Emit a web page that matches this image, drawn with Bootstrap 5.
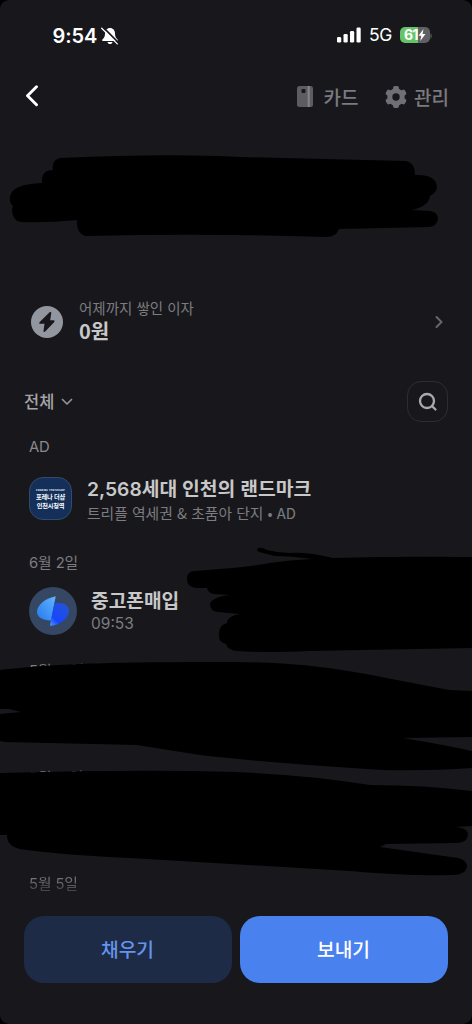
<!DOCTYPE html>
<html lang="ko" data-bs-theme="dark">
<head>
<meta charset="utf-8">
<meta name="viewport" content="width=device-width, initial-scale=1">
<title>계좌</title>
<link href="https://cdn.jsdelivr.net/npm/bootstrap@5.3.0/dist/css/bootstrap.min.css" rel="stylesheet">
<style>
  html, body { background: #000; }
  body { font-family: Inter, "Noto Sans CJK KR", sans-serif; overflow: hidden; }
  .phone { width: 472px; height: 1024px; background: #18181c; border-radius: 9px; overflow: hidden; }
  .phone svg { display: block; flex: none; }
  .phone span, .phone button, .phone .line { white-space: nowrap; }
  .kr { font-family: "Noto Sans CJK KR", sans-serif; }
  .status { height: 71px; padding: 0 40px 0 52.500px; color: #fff; }
  .clock { font-size: 20px; font-weight: 600; letter-spacing: -.1px; }
  .net { font-size: 17.5px; letter-spacing: -.3px; font-weight: 400; }
  .battery { width: 30px; height: 16px; border-radius: 5px; background: linear-gradient(90deg, #67c466 61%, #5f6064 61%); font-size: 14px; font-weight: 700; letter-spacing: -.5px; line-height: 16px; color: #fff; }
  .topbar { height: 52px; padding: 0 23px 0 25px; color: #7a7a80; font-size: 19px; font-weight: 500; }
  .topbar span { line-height: 26px; }
  .balance { height: 158px; }
  .interest { height: 82px; padding: 0 28.500px 0 31px; }
  .filters { height: 77px; padding: 0 24px; font-size: 16.5px; font-weight: 500; color: #a4a4a9; }
  .search-btn { width: 41px; height: 41px; border: 1px solid #2c2c33; border-radius: 14px; }
  .muted { color: #7c7c81; font-size: 15px; line-height: 20px; }
  .title-text { color: #c8c8c9; font-size: 19.2px; line-height: 24px; font-weight: 600; }
  .ad-logo { width: 43px; height: 43px; border-radius: 14px; border: 1px solid #334b68; background: #142f59; color: #fff; font-size: 6.2px; line-height: 9px; font-weight: 700; letter-spacing: -.2px; }
  .ad-logo small { font-size: 2.6px; line-height: 4px; letter-spacing: .25px; }
  .avatar { width: 48px; height: 48px; background: #354762; }
  .day { padding-left: 29px; height: 20px; font-size: 14.800px; letter-spacing: -.1px; }
  .day-fade { background: linear-gradient(#737378 25%, #46464b 85%); -webkit-background-clip: text; background-clip: text; color: transparent; }
  .cta { height: 67px; border: 0; border-radius: 20px; font-size: 19.200px; font-weight: 500; padding: 0 1px 1px 0; }
  .cta-fill { background: #1e2b46; color: #6594ed; }
  .cta-send { background: #4981ee; color: #fff; }
</style>
</head>
<body>
<main class="phone position-relative d-flex flex-column">
  <div class="status d-flex align-items-center">
    <span class="clock">9:54</span>
    <svg class="ms-1" width="18" height="18" viewBox="0 0 18 18"><path d="M9 1C6 1 4 3.4 4 6.5c0 3-.9 4.3-2.4 5.8-.7.8-.5 1.8.7 1.8h13.4c1.2 0 1.4-1 .7-1.8C14.900 10.800 14 9.500 14 6.500 14 3.400 12 1 9 1z" fill="#fff"/><path d="M6.500 15h5c-.3 1.400-1.200 2-2.500 2s-2.200-.6-2.500-2z" fill="#fff"/><path d="M2 .2 18 16.200" stroke="#18181c" stroke-width="1.800"/><path d="M.7 1.300 16.300 16.900" stroke="#fff" stroke-width="1.300" stroke-linecap="round"/></svg>
    <svg class="ms-auto" style="margin-top:-1px" width="24" height="16" viewBox="0 0 24 16" fill="#fff"><rect y="10" width="4.200" height="5.500" rx="1.300"/><rect x="6.500" y="7" width="4.200" height="8.500" rx="1.300"/><rect x="13" y="4" width="4.200" height="11.500" rx="1.300"/><rect x="19.500" y=".5" width="4.200" height="15" rx="1.300"/></svg>
    <span class="net" style="margin-left:7.500px">5G</span>
    <div class="battery ms-2 d-flex align-items-center" style="margin-top:-1px"><span class="ps-1">61</span><svg width="8" height="12" viewBox="0 0 8 12"><path d="M5.500 0 .5 6.700h2.800L2.200 12l5.300-7H4.600z" fill="#fff"/></svg></div>
    <svg width="2" height="6" viewBox="0 0 2 6"><path d="M.5 0Q3 3 .5 6z" fill="#5f6064"/></svg>
  </div>
  <header class="topbar d-flex align-items-center kr">
    <svg style="margin-top:-2px" width="14" height="22" viewBox="0 0 14 22"><path d="M11.500 1.800 2.500 10.800l9 9" fill="none" stroke="#fff" stroke-width="2.900" stroke-linecap="round" stroke-linejoin="round"/></svg>
    <svg class="ms-auto" width="17" height="22" viewBox="0 0 17 22"><rect width="16" height="21" rx="2.500" fill="#5c5c61"/><path d="M10.700 0h2v21h-2z" fill="#85858a"/><rect x="4.500" y="3" width="4" height="4" rx="1" fill="#18181c"/></svg>
    <span style="margin-left:10px">카드</span>
    <svg style="margin-left:26px" width="22" height="24" viewBox="-11 -12 22 24"><g fill="#6f6f75"><circle r="8.700"/><g id="t"><rect x="-2.900" y="-11" width="5.800" height="22" rx="1.800"/></g><use href="#t" transform="rotate(60)"/><use href="#t" transform="rotate(120)"/></g><circle r="3.700" fill="#18181c"/></svg>
    <span style="margin-left:7.500px">관리</span>
  </header>
  <div class="balance"></div>
  <section class="interest d-flex align-items-center">
    <svg width="32" height="32" viewBox="0 0 32 32"><circle cx="16" cy="16" r="16" fill="#92979f"/><path d="M18.600 6.300 8.700 15.900c-.9.900-.6 1.900.6 1.900h4.200l-1 7c-.1 1.200.9 1.600 1.700.8l8.900-9.400c.8-.9.500-1.900-.6-1.900h-3.300l1.100-7.200c.1-1.200-.9-1.600-1.700-.8z" fill="#18181c"/></svg>
    <div class="ms-3 kr pb-1">
      <div class="line muted" style="font-size:14.500px;line-height:22px">어제까지 쌓인 이자</div>
      <div class="line title-text" style="font-size:20px">0원</div>
    </div>
    <svg class="ms-auto" width="10" height="14" viewBox="0 0 10 14"><path d="M2.500 2 7.500 7l-5 5" fill="none" stroke="#66666c" stroke-width="2" stroke-linecap="round" stroke-linejoin="round"/></svg>
  </section>
  <section class="filters d-flex align-items-center kr">
    <span>전체</span>
    <svg style="margin-left:7px" width="12" height="8" viewBox="0 0 12 8"><path d="M1.500 1.500 6 6l4.500-4.500" fill="none" stroke="#929298" stroke-width="1.700" stroke-linecap="round" stroke-linejoin="round"/></svg>
    <div class="search-btn ms-auto d-flex align-items-center justify-content-center"><svg width="20" height="20" viewBox="0 0 20 20" fill="none" stroke="#aaaaae" stroke-width="2.300" stroke-linecap="round"><circle cx="9" cy="9" r="7"/><path d="m14.200 14.200 3.300 3.300"/></svg></div>
  </section>
  <div class="day muted" style="margin-top:-3px;color:#8a8a8f">AD</div>
  <section class="d-flex align-items-center" style="height:83px;padding-left:29px">
    <div class="ad-logo kr d-flex flex-column align-items-center justify-content-center flex-shrink-0"><small>FORENA THESHARP</small><span>포레나 더샵</span><span>인천시청역</span></div>
    <div style="margin-left:15px;padding-top:3px">
      <div class="line title-text" style="font-size:19.300px">2,568세대 인천의 랜드마크</div>
      <div class="line muted kr" style="margin-top:2px;font-size:14.800px">트리플 역세권 &amp; 초품아 단지 • AD</div>
    </div>
  </section>
  <div class="day muted" style="margin-top:13px">6월 2일</div>
  <section class="d-flex align-items-center" style="height:76px;padding-left:29px">
    <div class="avatar rounded-circle flex-shrink-0"><svg width="48" height="48" viewBox="0 0 48 48"><defs><linearGradient id="a" x1="0" y1="1" x2="1" y2="0"><stop stop-color="#2579ed"/><stop offset="1" stop-color="#61b5ff"/></linearGradient><linearGradient id="b" x1="0" y1="1" x2=".8" y2="0"><stop stop-color="#4e9cff"/><stop offset=".3" stop-color="#1746ff"/><stop offset="1" stop-color="#2553d4"/></linearGradient></defs><path d="M26.700 9.300C17 11 8 18 8 25c0 5 5 8 14 8.500z" fill="url(#a)"/><path d="M25.500 16C35 15 40 18.500 40 24c0 7-9 14-17.800 14.800-1 .1-1.300-.6-1-2z" fill="url(#b)"/></svg></div>
    <div style="margin-left:14px">
      <div class="line title-text kr">중고폰매입</div>
      <div class="line muted" style="margin-top:2px;font-size:15.500px">09:53</div>
    </div>
  </section>
  <div class="day muted" style="margin-top:12px">5월 31일</div>
  <div class="day muted" style="margin-top:87px">5월 17일</div>
  <div class="day muted" style="margin-top:86px"><span class="day-fade">5월 5일</span></div>
  <footer class="d-flex" style="gap:8px;padding:0 24px;margin-top:22px">
    <button class="cta cta-fill kr flex-fill">채우기</button>
    <button class="cta cta-send kr flex-fill">보내기</button>
  </footer>
  <!-- Marker strokes hiding private details -->
  <svg class="position-absolute top-0 start-0" width="472" height="1024" viewBox="0 0 472 1024" fill="#000">
    <path d="M60 158Q170 153 240 157L405 161Q415 162 415 175Q436 174 437 187Q437 192 430 196Q429 206 412 210L430 211Q438 212 438 219Q437 226 429 227L339 229Q336 237 326 237Q210 233 85 236Q76 233 77 220Q45 223 21 222Q12 221 12 209L13 206Q9 203 10 196Q13 184 42 183Q41 170 53 170Q51 160 60 158Z"/>
    <path d="M258 548Q262 547 267 550Q278 553 290 553Q308 552 333 558Q405 556 472 557V648L310 651Q260 653 237 651Q228 650 226 644Q218 642 219 634Q219 625 227 623Q227 616 240 614L218 612Q210 611 210 604Q212 597 230 595L214 594Q208 593 207 588H196Q187 587 187 579Q187 571 195 571Q250 567 270 563Q290 560 312 559Q290 556 275 556L259 552Q256 550 258 548Z"/>
    <path d="M0 670C60 663 120 662 235 662C330 663 365 675 449 690L472 691V737L403 738Q440 744 472 751V768Q430 771 382 770Q270 763 200 755L137 745L5 742L0 741V714L21 712L9 709H0Z"/>
    <path d="M0 773Q140 769 235 772Q310 775 370 785Q425 785 472 791V826L455 827Q468 828 468 835Q467 843 456 843L386 844L380 847L458 858Q467 860 467 867Q465 875 453 875Q400 876 350 871L130 858Q60 855 20 849Q7 846 7 836V835H0Z"/>
  </svg>
</main>
<script src="https://cdn.jsdelivr.net/npm/bootstrap@5.3.0/dist/js/bootstrap.bundle.min.js"></script>
</body>
</html>
